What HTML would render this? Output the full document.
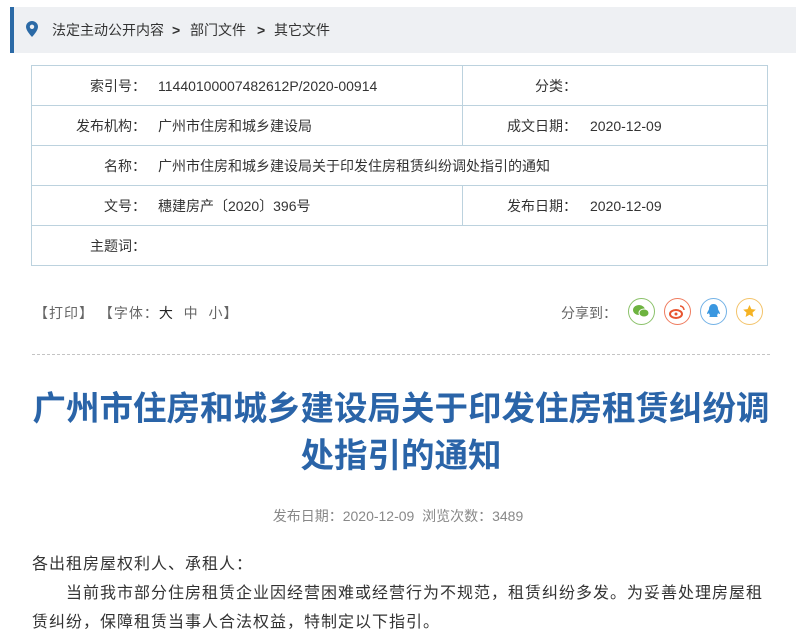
<!DOCTYPE html>
<html><head><meta charset="utf-8"><style>
*{margin:0;padding:0;box-sizing:border-box}
body{width:796px;height:642px;overflow:hidden;background:#fff;font-family:"Liberation Sans","Noto Sans CJK SC",sans-serif;color:#333;position:relative}
.a{position:absolute;white-space:nowrap}
.bc{left:10px;top:7px;width:786px;height:46px;background:#eef0f3;border-left:4px solid #2b6aa6}
.bc span{position:absolute;top:15px;font-size:14px;color:#333;line-height:16px}
.tb{left:31px;top:65px;width:737px;height:201px;border:1px solid #bcd2de}
.hr{position:absolute;left:0;width:735px;height:1px;background:#bcd2de}
.vr{position:absolute;left:430px;width:1px;height:40px;background:#bcd2de}
.c{position:absolute;font-size:14px;line-height:16px;white-space:nowrap}
.l{text-align:right}
.ic{position:absolute;top:298px;width:27px;height:27px;border-radius:50%;border:1px solid}
</style></head><body>
<div class="a bc">
<svg style="position:absolute;left:12px;top:14px" width="12" height="16" viewBox="0 0 12 16"><path d="M6 0C2.7 0 0 2.6 0 5.8 0 10 6 16 6 16s6-6 6-10.2C12 2.6 9.3 0 6 0z" fill="#2b6aa6"/><circle cx="6" cy="5.8" r="2.2" fill="#eef0f3"/></svg>
<span style="left:38px">法定主动公开内容</span>
<span style="left:158px;font-weight:bold">&gt;</span>
<span style="left:176px">部门文件</span>
<span style="left:243px;font-weight:bold">&gt;</span>
<span style="left:260px">其它文件</span>
</div>
<div class="a tb">
<div class="hr" style="top:39px"></div><div class="hr" style="top:79px"></div><div class="hr" style="top:119px"></div><div class="hr" style="top:159px"></div>
<div class="vr" style="top:0"></div><div class="vr" style="top:40px"></div><div class="vr" style="top:120px"></div>
<div class="c l" style="right:621px;top:12px">索引号：</div><div class="c" style="left:126px;top:12px">11440100007482612P/2020-00914</div>
<div class="c l" style="right:190px;top:12px">分类：</div>
<div class="c l" style="right:621px;top:52px">发布机构：</div><div class="c" style="left:126px;top:52px">广州市住房和城乡建设局</div>
<div class="c l" style="right:190px;top:52px">成文日期：</div><div class="c" style="left:558px;top:52px">2020-12-09</div>
<div class="c l" style="right:621px;top:92px">名称：</div><div class="c" style="left:126px;top:92px">广州市住房和城乡建设局关于印发住房租赁纠纷调处指引的通知</div>
<div class="c l" style="right:621px;top:132px">文号：</div><div class="c" style="left:126px;top:132px">穗建房产〔2020〕396号</div>
<div class="c l" style="right:190px;top:132px">发布日期：</div><div class="c" style="left:558px;top:132px">2020-12-09</div>
<div class="c l" style="right:621px;top:172px">主题词：</div>
</div>
<div class="a" style="left:34px;top:303px;font-size:14px;color:#666;letter-spacing:1px">【打印】 【字体：<span style="color:#222">大</span>&nbsp; 中&nbsp; 小】</div>
<div class="a" style="left:561px;top:303px;font-size:14px;color:#666">分享到：</div>
<div class="ic" style="left:628px;border-color:#8cc26b"><svg width="25" height="25" viewBox="0 0 25 25"><ellipse cx="10" cy="11" rx="6" ry="5" fill="#6db33f"/><ellipse cx="15" cy="14" rx="5" ry="4" fill="#6db33f" stroke="#fff" stroke-width="1"/></svg></div>
<div class="ic" style="left:664px;border-color:#ef7b5e"><svg width="25" height="25" viewBox="0 0 25 25"><ellipse cx="11" cy="15" rx="6" ry="4" fill="none" stroke="#e8542f" stroke-width="2"/><circle cx="11" cy="15" r="1.5" fill="#e8542f"/><path d="M15 7a4 4 0 0 1 4 4" stroke="#e8542f" stroke-width="1.5" fill="none"/></svg></div>
<div class="ic" style="left:700px;border-color:#73b2e6"><svg width="25" height="25" viewBox="0 0 25 25"><path d="M12.5 5c-3 0-4.5 2.5-4.5 5 0 1-2 3-2 5 1 0 1.5-.5 2-1 0 1 1 2 1 2.5-1 .5-1 1.5 1 1.5h5c2 0 2-1 1-1.5 0-.5 1-1.5 1-2.5.5.5 1 1 2 1 0-2-2-4-2-5 0-2.5-1.5-5-4.5-5z" fill="#3a97e0"/></svg></div>
<div class="ic" style="left:736px;border-color:#f3c36a"><svg width="25" height="25" viewBox="0 0 25 25"><path d="M12.5 6l1.9 4.1 4.4.5-3.3 3 .9 4.4-3.9-2.2-3.9 2.2.9-4.4-3.3-3 4.4-.5z" fill="#f5b324"/></svg></div>
<div class="a" style="left:32px;top:354px;width:738px;border-top:1px dashed #c4c4c4"></div>
<div class="a" style="left:0;width:802px;top:386px;text-align:center;font-size:33.5px;font-weight:bold;color:#2a64a8;line-height:47px;white-space:normal">广州市住房和城乡建设局关于印发住房租赁纠纷调<br>处指引的通知</div>
<div class="a" style="left:0;width:796px;top:506px;text-align:center;font-size:14px;color:#888">发布日期：2020-12-09&nbsp; 浏览次数：3489</div>
<div class="a" style="left:32px;top:550px;font-size:16px;line-height:29px;color:#333;letter-spacing:1px">各出租房屋权利人、承租人：<br>&emsp;&emsp;当前我市部分住房租赁企业因经营困难或经营行为不规范，租赁纠纷多发。为妥善处理房屋租<br>赁纠纷，保障租赁当事人合法权益，特制定以下指引。</div>
</body></html>
